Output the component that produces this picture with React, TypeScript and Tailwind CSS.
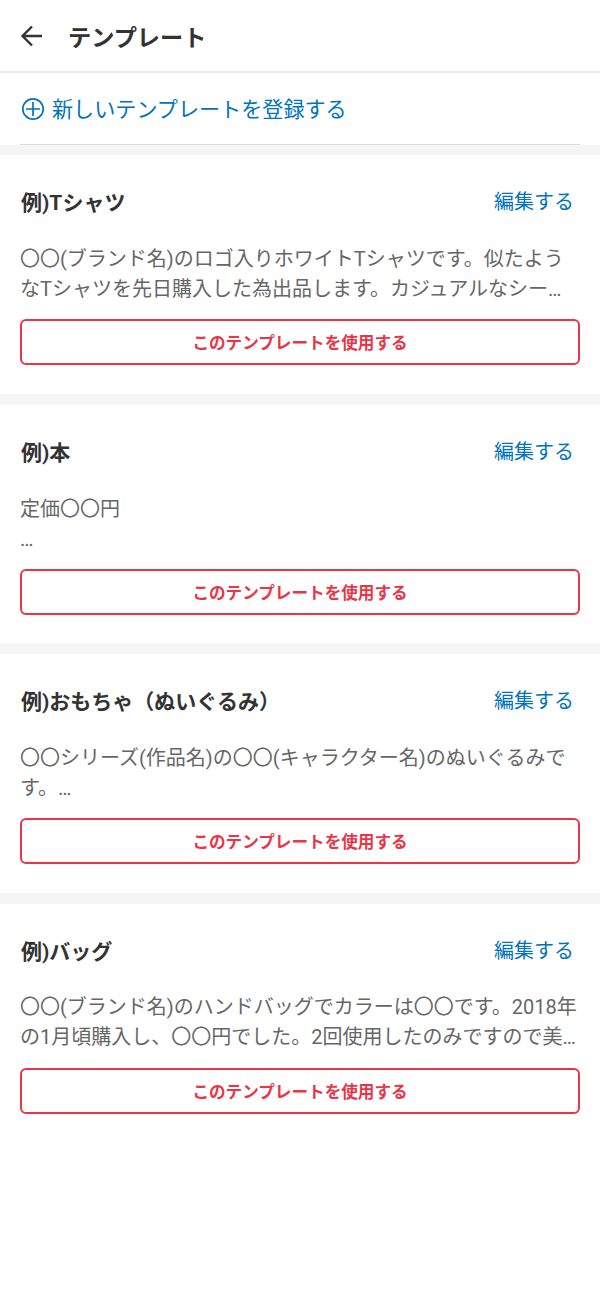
const cards = [
  { t: "例)Tシャツ", l: ["〇〇(ブランド名)のロゴ入りホワイトTシャツです。似たよう", "なTシャツを先日購入した為出品します。カジュアルなシー…"] },
  { t: "例)本", l: ["定価〇〇円", "…"] },
  { t: "例)おもちゃ（ぬいぐるみ）", l: ["〇〇シリーズ(作品名)の〇〇(キャラクター名)のぬいぐるみで", "す。…"] },
  { t: "例)バッグ", l: ["〇〇(ブランド名)のハンドバッグでカラーは〇〇です。2018年", "の1月頃購入し、〇〇円でした。2回使用したのみですので美…"] },
];

export default function App() {
  return (
    <div className="w-[600px] h-[1292px] bg-white overflow-hidden font-['Roboto','Noto_Sans_CJK_JP',sans-serif]">
      <header className="h-[73px] flex items-center border-b-2 border-[#ebebeb] pl-[20px]">
        <svg width="24" height="24" viewBox="0 0 24 24" fill="none" stroke="#333" strokeWidth="2.4" className="shrink-0 mt-[1px]">
          <path d="M22 12H2M12 2.5L2.5 12l9.5 9.5" />
        </svg>
        <h1 className="ml-[24px] pt-[6px] text-[23.2px] font-bold text-[#333]">テンプレート</h1>
      </header>
      <div className="px-[20px]">
        <div className="h-[72px] flex items-center border-b border-[#dcdcdc] text-[#0073bb]">
          <svg width="24" height="24" viewBox="0 0 24 24" fill="none" stroke="#0073bb" strokeWidth="1.7" className="ml-[1px] shrink-0">
            <circle cx="12" cy="12" r="10.2" />
            <path d="M12 5v14M5 12h14" />
          </svg>
          <span className="ml-[7px] pt-[3px] text-[21.1px]">新しいテンプレートを登録する</span>
        </div>
      </div>
      {cards.map((c, i) => (
        <section key={c.t} className={i === 0 ? "border-t-[10px] border-[#f5f5f5] h-[249px] px-[20px]" : "border-t-[11px] border-[#f5f5f5] h-[249.4px] px-[20px]"}>
          <div className="flex justify-between items-center pt-[32px] h-[65px]">
            <h2 className="text-[21px] font-bold text-[#333] ml-[1px]">{c.t}</h2>
            <span className="text-[20px] text-[#0073bb] mr-[6px] mb-[3px]">編集する</span>
          </div>
          <div className="mt-[23.5px] text-[20px] leading-[30px] text-[#666] whitespace-nowrap">
            {c.l.map((x) => <div key={x}>{x}</div>)}
          </div>
          <button className="mt-[15.5px] w-full h-[46px] pt-[5px] border-2 border-[#ea3548] rounded-[6px] text-[#ea3548] text-[16.6px] font-bold">
            このテンプレートを使用する
          </button>
        </section>
      ))}
    </div>
  );
}
